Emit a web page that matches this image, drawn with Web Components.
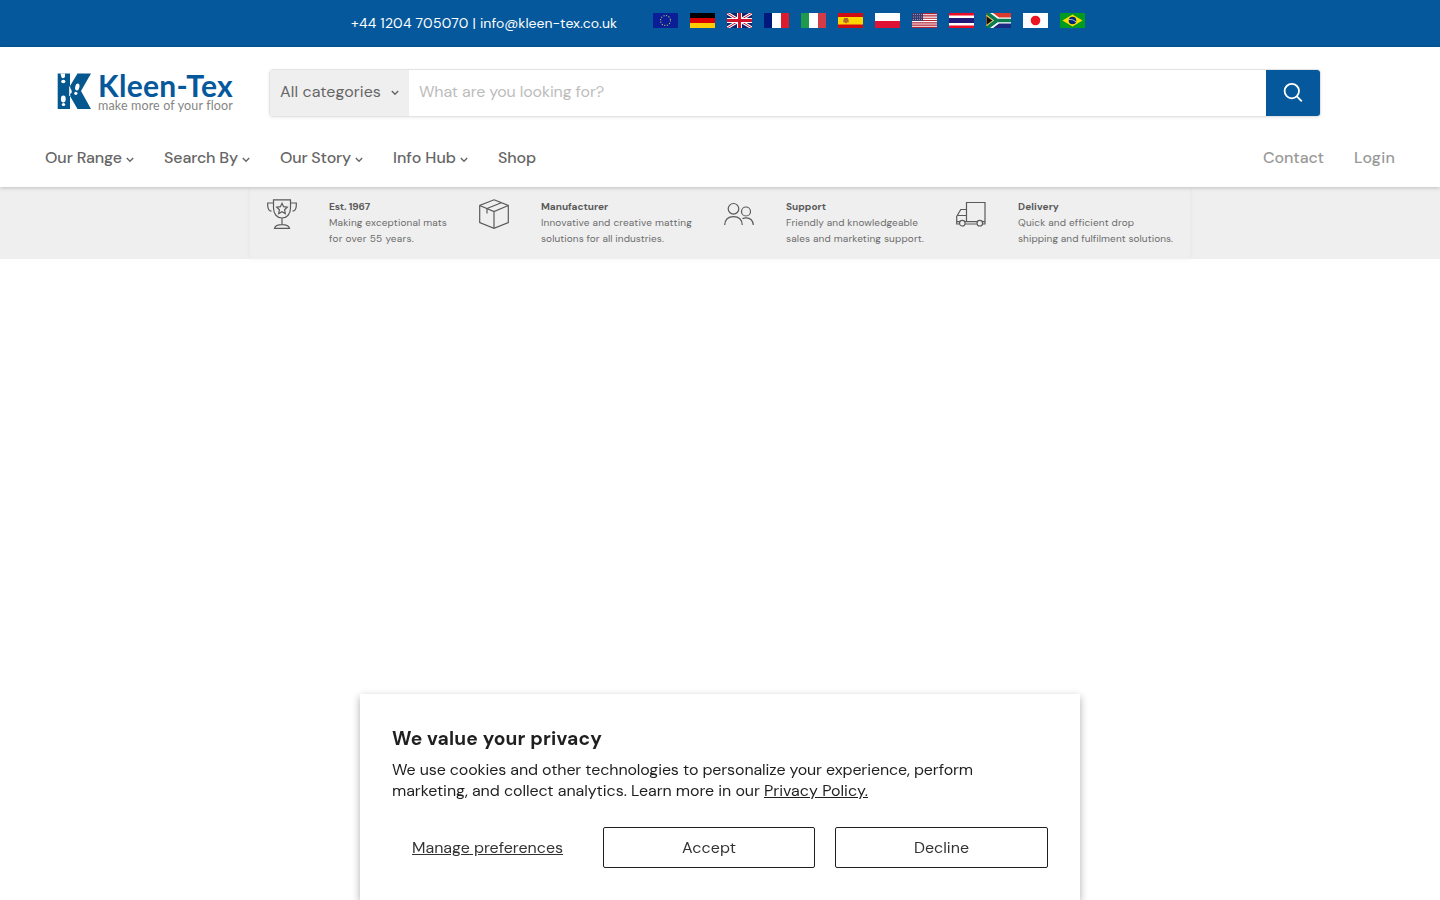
<!DOCTYPE html>
<html lang="en">
<head>
<meta charset="utf-8">
<title>Kleen-Tex</title>
<style>
    html, body {
        margin: 0;
        height: 100%;
        overflow: hidden;
        background: #fff;
    }
    body {
        font-family: "DM Sans", Inter, "Liberation Sans", sans-serif;
        font-size: 16px;
        color: #666;
        --brand: #05589b;
        --strip: #efefef;
    }
</style>
</head>
<body>
<top-bar></top-bar>
<site-header></site-header>
<benefit-strip>
    <benefit-item icon="trophy">
        <fit-text slot="title" w="41">Est. 1967</fit-text>
        <fit-text w="118">Making exceptional mats</fit-text>
        <fit-text w="85">for over 55 years.</fit-text>
    </benefit-item>
    <benefit-item icon="box">
        <fit-text slot="title" w="67">Manufacturer</fit-text>
        <fit-text w="151">Innovative and creative matting</fit-text>
        <fit-text w="123">solutions for all industries.</fit-text>
    </benefit-item>
    <benefit-item icon="people">
        <fit-text slot="title" w="40">Support</fit-text>
        <fit-text w="132">Friendly and knowledgeable</fit-text>
        <fit-text w="138">sales and marketing support.</fit-text>
    </benefit-item>
    <benefit-item icon="truck">
        <fit-text slot="title" w="41">Delivery</fit-text>
        <fit-text w="116">Quick and efficient drop</fit-text>
        <fit-text w="155">shipping and fulfilment solutions.</fit-text>
    </benefit-item>
</benefit-strip>
<cookie-banner></cookie-banner>

<script>
// ### FitText ###
// One line of text, tracked so it takes up exactly "w" pixels.
class FitText extends HTMLElement {
    constructor() {
        super();
        this.attachShadow({ mode: 'open' });
        this.shadowRoot.innerHTML = `<style>
                :host { display: inline-block; white-space: nowrap; }
                span { white-space: pre; }
            </style><span><slot></slot></span>`;
    }

    connectedCallback() {
        const width = parseFloat(this.getAttribute('w'));
        // The inner span, as the host itself may be stretched by a flex parent.
        const natural = this.shadowRoot.querySelector('span').getBoundingClientRect().width;
        if (!width || !natural) return;
        this.style.letterSpacing = (width - natural) / this.textContent.length + 'px';
        this.style.width = width + 'px';
    }
}

// ### FlagIcon ###
const FLAGS = {
    eu: `<rect width="25" height="15" fill="#0a1f96"/>
         <circle cx="12.5" cy="7.5" r="5" fill="none" stroke="#c9c56a" stroke-width="1.1" stroke-dasharray="1 1.618"/>`,
    de: `<rect width="25" height="5"/><rect y="5" width="25" height="5" fill="#d80000"/><rect y="10" width="25" height="5" fill="#fc0"/>`,
    gb: `<rect width="25" height="15" fill="#14246c"/>
         <path d="M0 0 25 15M25 0 0 15" stroke="#fff" stroke-width="3"/>
         <path d="M0 0 25 15M25 0 0 15" stroke="#cf142b" stroke-width="1"/>
         <path d="M12.5 0V15M0 7.5H25" stroke="#fff" stroke-width="5"/>
         <path d="M12.5 0V15M0 7.5H25" stroke="#cf142b" stroke-width="3"/>`,
    fr: `<rect width="25" height="15" fill="#fff"/><rect width="8" height="15" fill="#00197a"/><rect x="17" width="8" height="15" fill="#dc1c2c"/>`,
    it: `<rect width="25" height="15" fill="#fff"/><rect width="8" height="15" fill="#1f9a4c"/><rect x="17" width="8" height="15" fill="#d23c46"/>`,
    es: `<rect width="25" height="15" fill="#d00c13"/><rect y="4" width="25" height="7.5" fill="#ffd500"/>
         <path d="M6 5h4v4l-2 1.5L6 9z" fill="#b5652a"/><path d="M5.500 6.500v3M10.500 6.500v3" stroke="#b78a47"/>`,
    pl: `<rect width="25" height="8" fill="#fff"/><rect y="8" width="25" height="7" fill="#e01234"/>`,
    us: `<rect width="25" height="15" fill="#fff"/>
         <path d="M0 .6H25M0 2.9H25M0 5.2H25M0 7.5H25M0 9.8H25M0 12.1H25M0 14.4H25" stroke="#b22234" stroke-width="1.15"/>
         <rect width="11" height="8" fill="#3c3b6e"/>
         <path d="M1 1.5h10M1 4h10M1 6.5h10" stroke="#a9a9c9" stroke-width=".8" stroke-dasharray="1 1"/>`,
    th: `<rect width="25" height="15" fill="#fff"/><path d="M0 1.3H25M0 13.7H25" stroke="#ec0a24" stroke-width="2.6"/><rect y="5" width="25" height="5" fill="#1f1a7a"/>`,
    za: `<rect width="25" height="7.5" fill="#d93a2d"/><rect y="7.5" width="25" height="7.5" fill="#1a2a80"/>
         <path d="M2 0 12 7.5 2 15M11 7.5H25" fill="none" stroke="#fff" stroke-width="6"/>
         <path d="M1 0 11 7.5 1 15M11 7.5H25" fill="none" stroke="#0b7b50" stroke-width="3.6"/>
         <path d="M0 2.500 7 7.5 0 12.500z" fill="#111" stroke="#e0a820"/>`,
    jp: `<rect width="25" height="15" fill="#fff"/><circle cx="12.5" cy="7.5" r="4.8" fill="#ed1520"/>`,
    br: `<rect width="25" height="15" fill="#009b20"/><path d="M2.5 7.5 12.5 1.5 22.5 7.5 12.5 13.5z" fill="#fedf00"/>
         <circle cx="12.5" cy="7.5" r="3.8" fill="#002776"/><path d="M9 6.5q4-.5 7 2.3" fill="none" stroke="#cde" stroke-width=".8"/>`
};

class FlagIcon extends HTMLElement {
    constructor() {
        super();
        this.attachShadow({ mode: 'open' });
    }

    connectedCallback() {
        this.shadowRoot.innerHTML = `
            <style>
                :host { display: block; width: 25px; height: 15px; }
                svg { display: block; }
            </style>
            <svg width="25" height="15" viewBox="0 0 25 15">${FLAGS[this.getAttribute('code')]}</svg>
        `;
    }
}

// ### TopBar ###
class TopBar extends HTMLElement {
    constructor() {
        super();
        this.attachShadow({ mode: 'open' });
        this.shadowRoot.innerHTML = `
            <style>
                :host {
                    display: flex;
                    box-sizing: border-box;
                    height: 47px;
                    padding-left: 351px;
                    background: var(--brand);
                    color: #fff;
                    font-size: 14px;
                    line-height: 46px;
                }
                .flags {
                    display: flex;
                    gap: 12px;
                    margin: 13px 0 0 36px;
                }
            </style>
            <fit-text w="129">+44 1204 705070 | </fit-text><fit-text w="137">info@kleen-tex.co.uk</fit-text>
            <div class="flags">
                ${Object.keys(FLAGS).map(code => `<flag-icon code="${code}"></flag-icon>`).join('')}
            </div>
        `;
    }
}

// ### BrandLogo ###
class BrandLogo extends HTMLElement {
    constructor() {
        super();
        this.attachShadow({ mode: 'open' });
        this.shadowRoot.innerHTML = `
            <style>
                :host { display: flex; width: 176px; height: 42px; gap: 7px; font-family: Lato, sans-serif; }
                svg { flex: none; margin-top: 1px; }
                .words { display: flex; flex-direction: column; }
                .name { font-size: 30px; font-weight: 700; line-height: 28px; color: var(--brand); }
                .tag { font-size: 12.5px; line-height: 14px; color: #858585; }
            </style>
            <svg width="34" height="37" viewBox="0 0 34 37">
                <path d="M.7 1.500H13V14L20.500 1.500H34L24 19 34 37H20.500L13 24V37H.7z" fill="#05588f"/>
                <path d="M12.700 14.500V24" stroke="#fff"/>
                <g fill="#fff">
                    <ellipse cx="6.300" cy="9.500" rx="2.100" ry="1.800"/><path d="M3.500 1.500h4.500V5Q6.500 7 4.500 5.500z"/>
                    <ellipse cx="6.300" cy="27" rx="2.400" ry="3.400"/><ellipse cx="6.500" cy="32.600" rx="1.700" ry="1.500"/>
                    <ellipse cx="20.300" cy="15" rx="2.100" ry="3.600" transform="rotate(12 20.300 15)"/>
                    <ellipse cx="18.800" cy="21.300" rx="1.600" ry="1.600"/>
                    <path d="M13 16q2 1.500 1.800 4.500L13 22z"/>
                </g>
            </svg>
            <div class="words">
                <fit-text class="name" w="135">Kleen-Tex</fit-text>
                <fit-text class="tag" w="135">make more of your floor</fit-text>
            </div>
        `;
    }
}

// ### SearchBar ###
class SearchBar extends HTMLElement {
    constructor() {
        super();
        this.attachShadow({ mode: 'open' });
        this.shadowRoot.innerHTML = `
            <style>
                :host {
                    display: flex;
                    box-sizing: border-box;
                    width: 1052px;
                    height: 48px;
                    border: 1px solid #e3e3e3;
                    border-radius: 4px;
                    overflow: hidden;
                    box-shadow: 0 1px 3px rgba(0, 0, 0, .08);
                    line-height: 44px;
                }
                .category {
                    display: flex;
                    box-sizing: border-box;
                    width: 139px;
                    padding-left: 10px;
                    gap: 10px;
                    background: #efefef;
                }
                .category svg { margin-top: 20px; }
                .field { flex: 1; padding-left: 10px; color: #bcbcbc; }
                .go {
                    display: flex;
                    align-items: center;
                    justify-content: center;
                    width: 54px;
                    background: var(--brand);
                }
            </style>
            <div class="category">
                <fit-text w="101">All categories</fit-text>
                <svg width="8" height="6" viewBox="0 0 8 6"><path d="M.8 1 4 4.300 7.200 1" fill="none" stroke="#666" stroke-width="1.400"/></svg>
            </div>
            <div class="field"><fit-text w="185">What are you looking for?</fit-text></div>
            <div class="go">
                <svg width="20" height="20" viewBox="0 0 20 20" fill="none" stroke="#fff" stroke-width="1.800">
                    <circle cx="8.800" cy="8.100" r="7.200"/><path d="M13.900 13.400 18.800 18.300"/>
                </svg>
            </div>
        `;
    }
}

// ### NavLink ###
// The "menu" attribute adds the dropdown arrow.
class NavLink extends HTMLElement {
    constructor() {
        super();
        this.attachShadow({ mode: 'open' });
    }

    connectedCallback() {
        this.shadowRoot.innerHTML = `
            <style>
                :host { display: flex; gap: 4px; line-height: 20px; }
                svg { margin-top: 9px; }
            </style>
            <slot></slot>
            ${this.hasAttribute('menu') ? `<svg width="8" height="6" viewBox="0 0 8 6"><path d="M.8 1 4 4.300 7.200 1" fill="none" stroke="#666" stroke-width="1.400"/></svg>` : ''}
        `;
    }
}

// ### SiteHeader ###
class SiteHeader extends HTMLElement {
    constructor() {
        super();
        this.attachShadow({ mode: 'open' });
        this.shadowRoot.innerHTML = `
            <style>
                :host {
                    display: block;
                    position: relative;
                    z-index: 1;
                    box-sizing: border-box;
                    height: 140px;
                    padding-top: 22px;
                    background: #fff;
                    box-shadow: 0 1px 4px rgba(0, 0, 0, .2);
                }
                .main { display: flex; padding-left: 57px; gap: 36px; }
                brand-logo { margin-top: 2px; }
                nav {
                    display: flex;
                    gap: 30px;
                    padding: 31px 45px 0;
                    font-weight: 500;
                }
                .account { display: flex; gap: 30px; margin-left: auto; color: #999; }
            </style>
            <div class="main">
                <brand-logo></brand-logo>
                <search-bar></search-bar>
            </div>
            <nav>
                <nav-link menu><fit-text w="77">Our Range</fit-text></nav-link>
                <nav-link menu><fit-text w="74">Search By</fit-text></nav-link>
                <nav-link menu><fit-text w="71">Our Story</fit-text></nav-link>
                <nav-link menu><fit-text w="63">Info Hub</fit-text></nav-link>
                <nav-link><fit-text w="38">Shop</fit-text></nav-link>
                <div class="account">
                    <nav-link><fit-text w="61">Contact</fit-text></nav-link>
                    <nav-link><fit-text w="41">Login</fit-text></nav-link>
                </div>
            </nav>
        `;
    }
}

// ### Benefits ###
const BENEFIT_ICONS = {
    trophy: `<path d="M6.500.8H23.500V9C23.500 15 20 19 15 19S6.500 15 6.500 9zM6.500 4H.7V6.500Q.9 11.800 4.500 12.200M23.500 4H29.300V6.500Q29.100 11.800 25.500 12.200M15 19V25.500M7.500 29.300Q8.500 25.600 15 25.600T22.500 29.300z"/>
             <path d="M15 4.300 16.600 7.700 20.300 8.200 17.600 10.800 18.300 14.500 15 12.700 11.700 14.500 12.400 10.800 9.700 8.200 13.400 7.700z"/>`,
    box: `<path d="M15 .8 29.300 6.500V23.500L15 29.300.7 23.500V6.500zM.7 6.500 15 12.500 29.300 6.500M15 12.500V29M8 9.500V14.500M8 9.500 22.300 3.800"/>`,
    people: `<circle cx="9.500" cy="9.800" r="5.300"/><circle cx="22" cy="12.500" r="4.500"/><path d="M.7 26C1 20.500 4.500 17.600 9.500 17.600S18 20.500 18.300 26M18.500 19.600Q20 18.800 22 18.800C26.500 18.800 29 21.500 29.300 26"/>`,
    truck: `<path d="M10.500 23V3.500H29V25H26.800M20.700 25H9.300M3.300 25H.7V17.500L4.800 10.500H10.500M.7 22.600H29M2 16.500H10.500"/>
            <circle cx="6.300" cy="24.200" r="2.800" fill="#efefef"/><circle cx="23.800" cy="24.200" r="2.800" fill="#efefef"/>`
};

class BenefitItem extends HTMLElement {
    constructor() {
        super();
        this.attachShadow({ mode: 'open' });
    }

    connectedCallback() {
        this.shadowRoot.innerHTML = `
            <style>
                :host { display: flex; gap: 32px; }
                .copy { display: flex; flex-direction: column; font-size: 10px; line-height: 16px; }
                .title { display: flex; font-weight: 700; color: #5a5a5a; }
            </style>
            <svg width="30" height="30" viewBox="0 0 30 30" fill="none" stroke="#5a5a5a" stroke-width="1.200">${BENEFIT_ICONS[this.getAttribute('icon')]}</svg>
            <div class="copy">
                <div class="title"><slot name="title"></slot></div>
                <slot></slot>
            </div>
        `;
    }
}

class BenefitStrip extends HTMLElement {
    constructor() {
        super();
        this.attachShadow({ mode: 'open' });
        this.shadowRoot.innerHTML = `
            <style>
                :host { display: flex; justify-content: center; height: 72px; background: var(--strip); color: #6c6c6c; }
                .inner {
                    display: flex;
                    box-sizing: border-box;
                    width: 942px;
                    height: 72px;
                    padding: 12px 0 0 17px;
                    gap: 32px;
                    border: 1px solid #ebebeb;
                    border-width: 0 1px;
                    border-radius: 3px;
                    box-shadow: 0 1px 4px rgba(0, 0, 0, .04);
                }
            </style>
            <div class="inner"><slot></slot></div>
        `;
    }
}

// ### CookieBanner ###
class CookieBanner extends HTMLElement {
    constructor() {
        super();
        this.attachShadow({ mode: 'open' });
        this.shadowRoot.innerHTML = `
            <style>
                :host {
                    display: block;
                    position: fixed;
                    left: calc(50% - 360px);
                    bottom: 0;
                    box-sizing: border-box;
                    width: 720px;
                    height: 206px;
                    padding: 32px;
                    background: #fff;
                    color: #1f1f1f;
                    box-shadow: 0 3px 8px rgba(0, 0, 0, .32);
                }
                h2 { display: flex; margin: 0; font-size: 19.2px; font-weight: 700; line-height: 26px; }
                .text { margin-top: 7px; line-height: 21px; }
                .line { display: flex; }
                .link { text-decoration: underline; }
                .actions {
                    display: flex;
                    margin-top: 26px;
                    gap: 20px;
                    line-height: 41px;
                    color: #333;
                }
                .manage { width: 191px; text-align: center; }
                .button {
                    display: flex;
                    box-sizing: border-box;
                    width: 212px;
                    height: 41px;
                    align-items: center;
                    justify-content: center;
                    border: 1px solid #1f1f1f;
                    border-radius: 2px;
                }
                .button:last-child { width: 213px; }
            </style>
            <h2><fit-text w="210">We value your privacy</fit-text></h2>
            <div class="text">
                <div class="line"><fit-text w="581">We use cookies and other technologies to personalize your experience, perform</fit-text></div>
                <div class="line"><fit-text w="372">marketing, and collect analytics. Learn more in our </fit-text><fit-text class="link" w="104">Privacy Policy.</fit-text></div>
            </div>
            <div class="actions">
                <div class="manage"><fit-text class="link" w="151">Manage preferences</fit-text></div>
                <div class="button"><fit-text w="54">Accept</fit-text></div>
                <div class="button"><fit-text w="55">Decline</fit-text></div>
            </div>
        `;
    }
}

customElements.define('flag-icon', FlagIcon);
customElements.define('brand-logo', BrandLogo);
customElements.define('search-bar', SearchBar);
customElements.define('nav-link', NavLink);
customElements.define('benefit-item', BenefitItem);
customElements.define('top-bar', TopBar);
customElements.define('site-header', SiteHeader);
customElements.define('benefit-strip', BenefitStrip);
customElements.define('cookie-banner', CookieBanner);
// Last, so every line is measured with its final styles in place.
customElements.define('fit-text', FitText);
</script>
</body>
</html>
